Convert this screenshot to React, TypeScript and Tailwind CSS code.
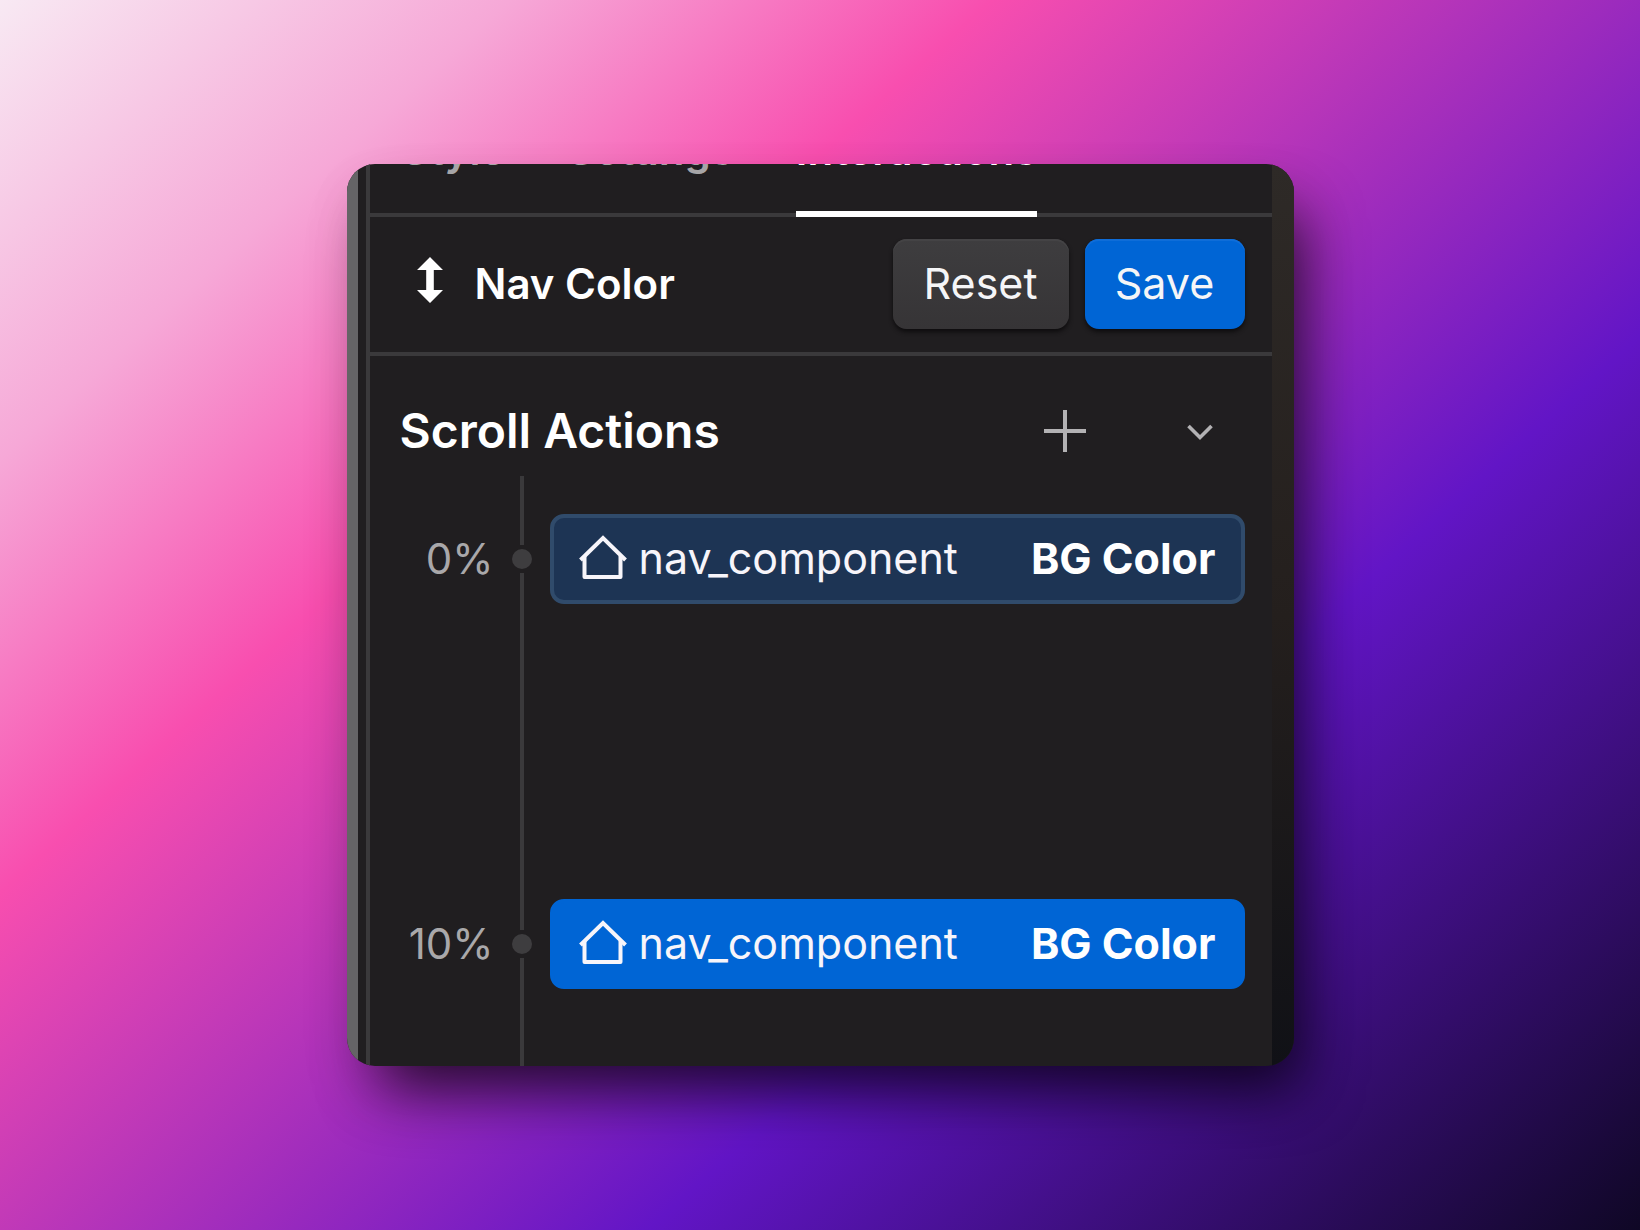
import clsx from "clsx";
import { ComponentPropsWithoutRef } from "react";

const tabs = ["Style", "Settings", "Interactions"];

const actions = [
  { offset: "0%", target: "nav_component", property: "BG Color", selected: false },
  { offset: "10%", target: "nav_component", property: "BG Color", selected: true },
];

const ScrollIcon = (props: ComponentPropsWithoutRef<"svg">) => (
  <svg viewBox="0 0 26 46" fill="currentColor" aria-hidden="true" {...props}>
    <path d="M13 0 L26 13 H16.8 V33 H26 L13 46 L0 33 H9.2 V13 H0 Z" />
  </svg>
);

const HouseIcon = (props: ComponentPropsWithoutRef<"svg">) => (
  <svg
    viewBox="0 0 48 46"
    fill="none"
    stroke="currentColor"
    strokeWidth="4"
    strokeLinejoin="round"
    aria-hidden="true"
    {...props}
  >
    <path d="M1.5 25 L24 3 L46.5 25" strokeLinejoin="miter" />
    <path d="M5.5 21 V42 H41.5 V21" />
  </svg>
);

const PlusIcon = (props: ComponentPropsWithoutRef<"svg">) => (
  <svg viewBox="0 0 42 42" stroke="currentColor" strokeWidth="4" aria-hidden="true" {...props}>
    <path d="M21 0 V42 M0 21 H42" />
  </svg>
);

const ChevronIcon = (props: ComponentPropsWithoutRef<"svg">) => (
  <svg viewBox="0 0 26 20" fill="none" stroke="currentColor" strokeWidth="3.6" aria-hidden="true" {...props}>
    <path d="M1.5 5 L13 16.5 L24.5 5" />
  </svg>
);

const Button = ({ className, ...props }: ComponentPropsWithoutRef<"button">) => (
  <button
    type="button"
    className={clsx(
      "h-[90px] rounded-[14px] text-[43px] leading-none text-[#f5f5f7]",
      className
    )}
    {...props}
  />
);

const Tabs = () => (
  <nav className="flex h-[53px] items-end gap-[62px] border-b-4 border-[#3a393b] pl-8">
    {tabs.map((tab) => (
      <button
        key={tab}
        type="button"
        className={clsx(
          "-mb-1 border-b-6 pb-[39px] text-[42px] leading-[44px] font-semibold",
          tab === "Interactions"
            ? "border-white text-white"
            : "border-transparent text-[#a6a5a7]"
        )}
      >
        {tab}
      </button>
    ))}
  </nav>
);

const Timeline = () => (
  <ol>
    {actions.map((action) => (
      <li key={action.offset} className="group flex">
        <span className="mt-[38px] w-[124px] text-right text-[42px] leading-[90px] text-[#a9a8aa]">
          {action.offset}
        </span>
        <div className="ml-[18px] flex w-5 flex-col items-center gap-1">
          <span className="h-[69px] w-1 bg-[#3a393b]" />
          <span className="size-5 rounded-full bg-[#3e3d3f]" />
          <span className="-mb-1 w-1 flex-1 bg-[#3a393b]" />
        </div>
        <div className="flex-1 pt-[38px] pr-[27px] pb-[257px] pl-[18px] group-last:pb-[77px]">
          <button
            type="button"
            className={clsx(
              "flex h-[90px] w-full items-center rounded-[14px] border-4 px-[25px] pb-[2px] text-[43px] leading-none text-[#f7f5fa]",
              action.selected
                ? "border-[#0065d5] bg-[#0065d5]"
                : "border-[#304b6b] bg-[#1d3454]"
            )}
          >
            <HouseIcon className="mr-3 h-[46px] w-12" />
            {action.target}
            <strong className="ml-auto font-bold text-white">{action.property}</strong>
          </button>
        </div>
      </li>
    ))}
  </ol>
);

const App = () => {
  return (
    <main className="flex min-h-screen items-center justify-center bg-[linear-gradient(138deg,#f8e9f3_0%,#f6a8d7_17%,#f84eaf_33%,#6215c6_67%,#0f0725_100%)] font-[Inter,sans-serif]">
      <div className="flex w-full max-w-[947px] overflow-hidden rounded-[28px] bg-[#201e20] shadow-[20px_36px_60px_-14px_rgba(0,0,0,0.75),8px_32px_60px_rgba(0,0,0,0.1)]">
        <div className="mr-2 w-[11px] bg-[#656466]" />
        <section className="flex-1 border-l-4 border-[#3a393b]">
          <Tabs />
          <header className="flex h-[139px] items-center border-b-4 border-[#3a393b] pr-[27px] pb-[2px] pl-[47px] text-white">
            <ScrollIcon className="mb-2 h-[46px] w-[26px]" />
            <h1 className="ml-8 text-[42px] leading-none font-semibold">Nav Color</h1>
            <Button className="ml-auto w-44 bg-linear-to-b from-[#3e3d3f] to-[#363436] shadow-[inset_0_2px_0_#444345,0_3px_4px_#0e0d0e]">
              Reset
            </Button>
            <Button className="ml-4 w-40 bg-[#0065d5] shadow-[inset_0_2px_0_#0f6dd8,0_3px_4px_#0e0d0e]">
              Save
            </Button>
          </header>
          <div className="flex h-[120px] items-center pt-[30px] pr-[59px] pl-[30px] text-[#b3b2b4]">
            <h2 className="mr-auto text-[48px] leading-none font-semibold text-white">Scroll Actions</h2>
            <button type="button" aria-label="Add action" className="mr-[101px]">
              <PlusIcon className="size-[42px]" />
            </button>
            <button type="button" aria-label="Collapse">
              <ChevronIcon className="h-5 w-[26px]" />
            </button>
          </div>
          <Timeline />
        </section>
        <div className="w-[22px] bg-linear-to-b from-[#2e2a27] via-[#241f1d] to-[#101116]" />
      </div>
    </main>
  );
};

export default App;
